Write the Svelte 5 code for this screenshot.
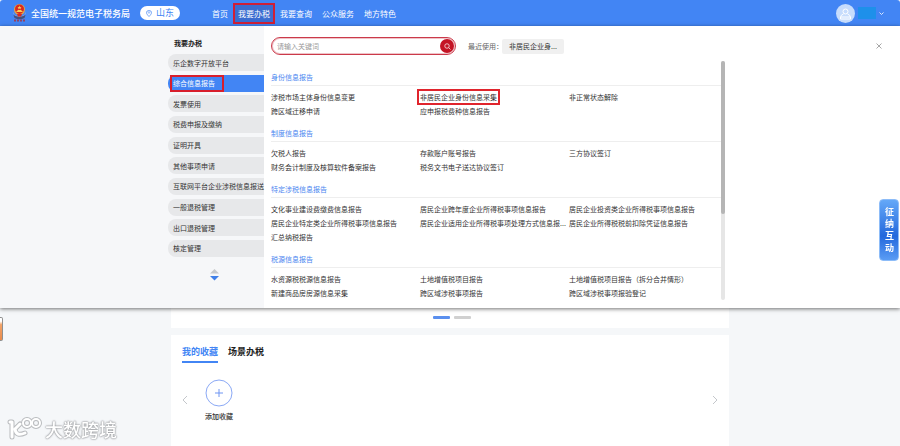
<script>
    let navItems = ["首页", "我要办税", "我要查询", "公众服务", "地方特色"]
    let activeNav = "我要办税"

    let sideItems = [
        "乐企数字开放平台",
        "综合信息报告",
        "发票使用",
        "税费申报及缴纳",
        "证明开具",
        "其他事项申请",
        "互联网平台企业涉税信息报送",
        "一般退税管理",
        "出口退税管理",
        "核定管理"
    ]
    let activeSide = "综合信息报告"

    let marked = "非居民企业身份信息采集"
    let sections = [
        {
            title: "身份信息报告",
            links: ["涉税市场主体身份信息变更", "非居民企业身份信息采集", "非正常状态解除", "跨区域迁移申请", "应申报税费种信息报告"]
        },
        {
            title: "制度信息报告",
            links: ["欠税人报告", "存款账户账号报告", "三方协议签订", "财务会计制度及核算软件备案报告", "税务文书电子送达协议签订"]
        },
        {
            title: "特定涉税信息报告",
            links: [
                "文化事业建设费缴费信息报告", "居民企业跨年度企业所得税事项信息报告", "居民企业投资类企业所得税事项信息报告",
                "居民企业特定类企业所得税事项信息报告", "居民企业适用企业所得税事项处理方式信息报...", "居民企业所得税税前扣除凭证信息报告",
                "汇总纳税报告"
            ]
        },
        {
            title: "税源信息报告",
            links: ["水资源税税源信息报告", "土地增值税项目报告", "土地增值税项目报告（拆分合并情形）", "新建商品房房源信息采集", "跨区域涉税事项报告", "跨区域涉税事项报验登记"]
        }
    ]

    let tabs = ["我的收藏", "场景办税"]
    let activeTab = "我的收藏"
    let keyword = ""
</script>

<div class="page">
    <header>
        <svg class="emblem" viewBox="0 0 30 40" aria-hidden="true">
            <path d="M2 17 Q3 27 15 28 Q27 27 28 17 L25 24 Q15 29 5 24 Z" fill="#d9c9b4" />
            <path d="M3 24 Q15 31 27 24 L25 30 Q15 35 5 30 Z" fill="#44517f" />
            <circle cx="15" cy="13" r="11" fill="#e5a343" />
            <circle cx="15" cy="12" r="9" fill="#d9281f" />
            <path d="M15 5 l1 3 h3 l-2 2 l1 3 l-3 -2 l-3 2 l1 -3 l-2 -2 h3 Z" fill="#f8cf54" />
            <path d="M9 16 h12 v2 h-12 Z M11 14 h8 v2 h-8 Z" fill="#f8cf54" />
            <path d="M10 22 L15 20 L20 22 L18 27 H12 Z" fill="#d9281f" />
            <path d="M4 35 h4 M10 35 h4 M16 35 h4 M22 35 h4" stroke="#94405f" stroke-width="4" />
        </svg>
        <strong class="brand">全国统一规范电子税务局</strong>
        <button class="region">
            <svg viewBox="0 0 12 14" aria-hidden="true">
                <path d="M6 13 C2 9 1 7 1 5 A5 4 0 0 1 11 5 C11 7 10 9 6 13 Z" fill="none" stroke="#4285f4" stroke-width="1.4" />
                <circle cx="6" cy="5" r="1.6" fill="none" stroke="#4285f4" />
            </svg>
            山东
        </button>
        <nav>
            {#each navItems as item}
                <button class:active={item === activeNav} on:click={() => activeNav = item}>{item}</button>
            {/each}
        </nav>
        <button class="user" aria-label="用户">
            <svg class="avatar" viewBox="0 0 38 38" aria-hidden="true">
                <circle cx="19" cy="19" r="19" fill="#c6dcfc" />
                <circle cx="19" cy="15" r="5" fill="none" stroke="#fff" stroke-width="2" />
                <path d="M15 20 Q9 22 9 27 M23 20 Q29 22 29 27 M9 26 h20 v4 h-20 Z" fill="none" stroke="#fff" stroke-width="2" />
            </svg>
            <span class="name"></span>
            <svg class="caret" viewBox="0 0 10 6" aria-hidden="true"><path d="M1 1 L5 5 L9 1" fill="none" stroke="#fff" stroke-width="1.6" /></svg>
        </button>
    </header>

    <section class="mega">
        <aside>
            <h2>我要办税</h2>
            <ul>
                {#each sideItems as item}
                    <li><button class:active={item === activeSide} on:click={() => activeSide = item}>{item}</button></li>
                {/each}
            </ul>
            <svg class="pager" viewBox="0 0 18 24" aria-hidden="true">
                <path d="M9 0 L18 9 H0 Z" fill="#c6c8cb" />
                <path d="M0 14 H18 L9 23 Z" fill="#3f7fe8" />
            </svg>
        </aside>

        <div class="content">
            <div class="tools">
                <form class="search" on:submit|preventDefault>
                    <input type="text" aria-label="关键词" placeholder="请输入关键词" bind:value={keyword} />
                    <button aria-label="搜索">
                        <svg viewBox="0 0 14 14" aria-hidden="true">
                            <circle cx="6" cy="6" r="4.5" fill="none" stroke="#fff" stroke-width="1.4" />
                            <path d="M9.5 9.5 L13 13" stroke="#fff" stroke-width="1.4" />
                        </svg>
                    </button>
                </form>
                <span class="recent">最近使用：</span>
                <button class="chip">非居民企业身...</button>
            </div>
            <div class="scroll">
                <div class="groups">
                    {#each sections as section}
                        <section>
                            <h3>{section.title}</h3>
                            <div class="links">
                                {#each section.links as link}
                                    <a href="#top" class:marked={link === marked}>{link}</a>
                                {/each}
                            </div>
                        </section>
                    {/each}
                </div>
                <div class="track"><div class="thumb"></div></div>
            </div>
        </div>

        <button class="close" aria-label="关闭">
            <svg viewBox="0 0 12 12" aria-hidden="true"><path d="M1 1 L11 11 M11 1 L1 11" stroke="#8a8a8a" stroke-width="1.5" /></svg>
        </button>
    </section>

    <main>
        <div class="card banner">
            <span class="dot on"></span>
            <span class="dot"></span>
        </div>
        <div class="card favorites">
            <div class="tabs">
                {#each tabs as tab}
                    <button class:active={tab === activeTab} on:click={() => activeTab = tab}>{tab}</button>
                {/each}
            </div>
            <div class="carousel">
                <button class="arrow" aria-label="上一页">
                    <svg viewBox="0 0 6 10" aria-hidden="true"><path d="M5 1 L1 5 L5 9" fill="none" stroke="#c4c7cb" /></svg>
                </button>
                <button class="add">
                    <svg viewBox="0 0 28 28" aria-hidden="true">
                        <circle cx="14" cy="14" r="13" fill="none" stroke="#8ba9f5" />
                        <path d="M14 10 V18 M10 14 H18" stroke="#6f95f2" />
                    </svg>
                    添加收藏
                </button>
                <button class="arrow next" aria-label="下一页">
                    <svg viewBox="0 0 6 10" aria-hidden="true"><path d="M1 1 L5 5 L1 9" fill="none" stroke="#c4c7cb" /></svg>
                </button>
            </div>
        </div>
    </main>

    <button class="interact">征纳互动</button>
    <div class="edge"></div>

    <div class="watermark">
        <svg viewBox="0 0 34 24" aria-hidden="true">
            <g fill="none" stroke-linecap="round" stroke-linejoin="round">
                <g stroke="#b9bbbe" stroke-width="5">
                    <path d="M2 5 H4 V20 M12 7 L7 12 Q8 20 17 16" />
                    <circle cx="19" cy="6" r="4" stroke-width="4" />
                    <circle cx="28" cy="6" r="4" stroke-width="4" />
                </g>
                <g stroke="#fff" stroke-width="3">
                    <path d="M2 5 H4 V20 M12 7 L7 12 Q8 20 17 16" />
                    <circle cx="19" cy="6" r="4" stroke-width="2" />
                    <circle cx="28" cy="6" r="4" stroke-width="2" />
                </g>
            </g>
        </svg>
        大数跨境
    </div>
</div>

<style>
    :global(body) {
        background: #f5f7f9;
    }
    .page {
        display: flex;
        flex-direction: column;
        min-height: 100vh;
        font-family: "Noto Sans CJK SC", sans-serif;
        font-size: 7px;
        color: #333;
    }
    button, input {
        font: inherit;
        color: inherit;
        border: 0;
        padding: 0;
        background: none;
    }
    button {
        cursor: pointer;
        white-space: nowrap;
    }
    svg {
        display: block;
        flex: none;
    }
    h2, h3, ul {
        margin: 0;
        padding: 0;
        font-size: 7px;
    }

    header {
        display: flex;
        align-items: center;
        height: 26px;
        padding: 0 16px 0 12px;
        background: #4285f4;
        border-radius: 3px 3px 0 0;
        color: #fff;
    }
    .emblem {
        width: 15px;
        height: 20px;
        margin-right: 4px;
    }
    .brand {
        font-size: 9px;
        font-weight: 500;
    }
    .region {
        display: flex;
        align-items: center;
        justify-content: center;
        gap: 4px;
        width: 40px;
        height: 14px;
        margin: 0 29px 0 10px;
        border-radius: 7px;
        background: #fff;
        color: #4285f4;
        font-size: 9px;
        line-height: 14px;
    }
    .region svg {
        width: 6px;
        height: 7px;
    }
    nav {
        display: flex;
        gap: 4px;
        font-size: 8px;
    }
    nav button {
        height: 17px;
        padding: 0 3px;
    }
    nav .active {
        background: #3a6cd0;
        outline: 2px solid #cf1f36;
    }
    .user {
        display: flex;
        align-items: center;
        gap: 3px;
        margin-left: auto;
    }
    .avatar {
        width: 19px;
        height: 19px;
    }
    .name {
        width: 18px;
        height: 12px;
        background: #1e90ea;
    }
    .caret {
        width: 5px;
        height: 3px;
    }

    .mega {
        position: relative;
        z-index: 1;
        display: flex;
        background: #fff;
        box-shadow: 0 1px 4px rgba(0, 0, 0, 0.55);
    }
    aside {
        display: flex;
        flex-direction: column;
        align-items: flex-end;
        width: calc(50% - 186px);
        background: #f6f7f9;
    }
    h2 {
        width: 90px;
        padding: 12px 0 6px;
        line-height: 10px;
        color: #222;
    }
    ul {
        display: flex;
        flex-direction: column;
        justify-content: space-between;
        width: 96px;
        height: 203px;
        list-style: none;
    }
    li button {
        position: relative;
        display: block;
        width: 100%;
        height: 17px;
        padding-left: 5px;
        border-radius: 8px 0 0 8px;
        background: #e7e8ea;
        text-align: left;
    }
    li .active {
        background: #4285f4;
        color: #fff;
    }
    li .active::after {
        content: "";
        position: absolute;
        inset: 0 40px 0 2px;
        border: 2px solid #d81e2c;
    }
    .pager {
        width: 9px;
        height: 12px;
        margin: 12px 45px 27px 0;
    }

    .content {
        width: 454px;
        padding: 11px 0 7px 7px;
    }
    .tools {
        display: flex;
        align-items: center;
        height: 18px;
    }
    .search {
        display: flex;
        align-items: center;
        box-sizing: border-box;
        width: 185px;
        height: 18px;
        padding: 0 1px 0 5px;
        border: 1px solid #cb3a4a;
        border-radius: 9px;
        box-shadow: inset 0 0 0 1px #efc3c8;
    }
    .search input {
        flex: 1;
        min-width: 0;
        outline: 0;
    }
    .search input::placeholder {
        color: #999;
    }
    .search button {
        display: flex;
        align-items: center;
        justify-content: center;
        width: 14px;
        height: 14px;
        border-radius: 50%;
        background: #c41425;
    }
    .search svg {
        width: 7px;
        height: 7px;
    }
    .recent {
        margin-left: 12px;
        width: 34px;
        color: #666;
        white-space: nowrap;
    }
    .chip {
        width: 62px;
        height: 15px;
        border-radius: 2px;
        background: #f0f0f0;
    }
    .scroll {
        display: flex;
        margin-top: 6px;
    }
    .groups {
        flex: 1;
        padding-top: 8px;
    }
    .groups section {
        margin-bottom: 7px;
    }
    .groups section:last-child {
        margin-bottom: 0;
    }
    h3 {
        line-height: 16px;
        font-weight: 400;
        color: #4a86f0;
        border-bottom: 1px solid #eee;
    }
    .links {
        display: grid;
        grid-template-columns: repeat(3, minmax(0, 1fr));
        row-gap: 4px;
        padding: 6px 3px 2px 0;
    }
    a {
        justify-self: start;
        line-height: 10px;
        color: #333;
        text-decoration: none;
        white-space: nowrap;
    }
    .marked {
        outline: 2px solid #e0242c;
        outline-offset: 1px;
    }
    .track {
        width: 4px;
        border-radius: 2px;
        background: #e6e6e6;
    }
    .thumb {
        height: 64%;
        border-radius: 2px;
        background: #b5b5b5;
    }
    .close {
        align-self: flex-start;
        margin: 17px 18px 0 auto;
    }
    .close svg {
        width: 6px;
        height: 6px;
    }

    main {
        flex: 1;
        display: flex;
        flex-direction: column;
        gap: 7px;
        width: 62%;
        margin: 0 auto;
    }
    .card {
        background: #fff;
    }
    .banner {
        display: flex;
        justify-content: center;
        gap: 4px;
        padding: 8px 0 9px 4px;
    }
    .dot {
        width: 17px;
        height: 3px;
        border-radius: 1px;
        background: #d0d0d0;
    }
    .dot.on {
        background: #5a8fee;
    }
    .favorites {
        flex: 1;
        padding: 11px;
    }
    .tabs {
        display: flex;
        gap: 10px;
        font-size: 9px;
        font-weight: 700;
        color: #222;
    }
    .tabs button {
        height: 17px;
        padding-bottom: 3px;
        line-height: 12px;
        border-bottom: 2px solid transparent;
    }
    .tabs .active {
        color: #4285f4;
        border-color: #4285f4;
    }
    .carousel {
        display: flex;
        align-items: center;
        padding-top: 16px;
    }
    .arrow svg {
        width: 6px;
        height: 10px;
    }
    .next {
        margin-left: auto;
    }
    .add {
        display: flex;
        flex-direction: column;
        align-items: center;
        gap: 4px;
        margin-left: 17px;
        font-weight: 500;
        line-height: 10px;
    }
    .add svg {
        width: 28px;
        height: 28px;
    }

    .interact {
        position: fixed;
        z-index: 2;
        right: 1px;
        top: 199px;
        width: 20px;
        height: 62px;
        padding: 0 5px;
        border: 1px solid #8dbcf8;
        border-radius: 4px;
        background: linear-gradient(#64a8f8, #2468dc 60%, #5a9cf4);
        color: #fff;
        font-size: 9px;
        font-weight: 700;
        line-height: 12px;
        white-space: normal;
        word-break: break-all;
    }
    .edge {
        position: fixed;
        left: 0;
        top: 317px;
        width: 2px;
        height: 22px;
        border: 1px solid #8f8f8f;
        border-left: 0;
        border-radius: 0 2px 2px 0;
        background: linear-gradient(#fff 15%, #f3a469 30%, #e98b4c);
    }
    .watermark {
        position: fixed;
        left: 8px;
        bottom: 4px;
        display: flex;
        align-items: center;
        gap: 3px;
        font-size: 18px;
        font-weight: 500;
        line-height: 26px;
        color: #fff;
        text-shadow: 0 0 2px #9b9da0, 0 0 2px #9b9da0, 0 0 1px #9b9da0;
    }
    .watermark svg {
        width: 34px;
        height: 24px;
        overflow: visible;
    }
</style>
